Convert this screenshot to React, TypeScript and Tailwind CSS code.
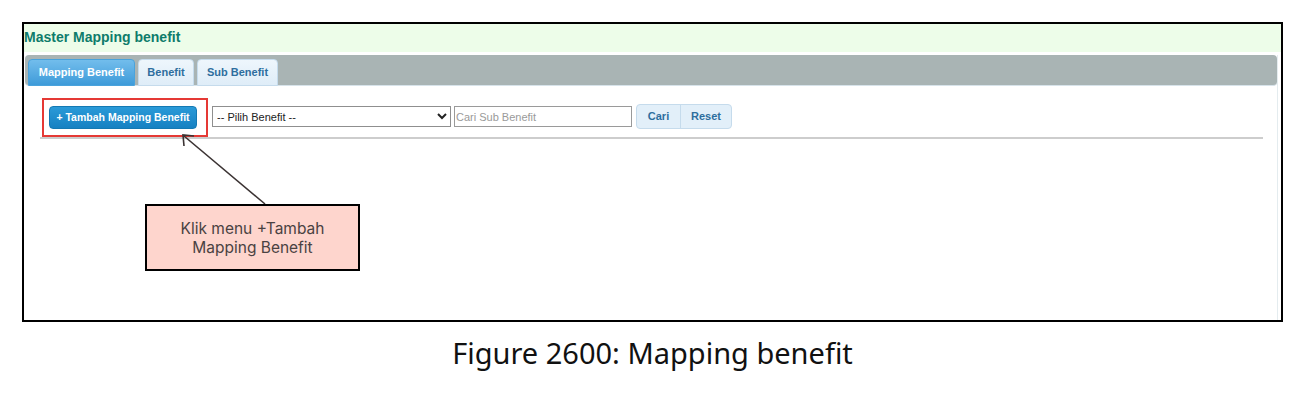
import React from 'react';

// ── Tabs on the grey tab bar ────────────────────────────────────────────────
const tabs = [
  { label: 'Mapping Benefit', active: true, w: 'w-[107px]' },
  { label: 'Benefit', active: false, w: 'w-[56px]' },
  { label: 'Sub Benefit', active: false, w: 'w-[81px]' },
];

const TabBar: React.FC = () => (
  <div className="ml-[1px] mt-[3px] h-[31px] w-[1252px] rounded-[4px] border-b border-[#d7e3ea] bg-[#a9b4b4] pl-[3px] pt-[4px] flex gap-[3px]">
    {tabs.map((t) => (
      <div
        key={t.label}
        className={
          t.active
            ? `${t.w} h-[27px] rounded-t-[4px] border border-[#4aa3dc] bg-gradient-to-b from-[#72bdec] to-[#3d9bd9] text-white flex items-center justify-center text-[11px] font-bold`
            : `${t.w} h-[27px] rounded-t-[4px] border border-[#c5dbec] bg-gradient-to-b from-[#eef6fc] to-[#dfedf8] text-[#2e6e9e] flex items-center justify-center text-[11px] font-bold`
        }
      >
        {t.label}
      </div>
    ))}
  </div>
);

// ── Toolbar with the annotated add button ───────────────────────────────────
const Toolbar: React.FC = () => (
  <div className="mt-[18px] pl-[25px] flex items-center h-[25px]">
    <span className="relative">
      <button className="h-[23px] w-[148px] rounded-[4px] border border-[#1479b3] bg-gradient-to-b from-[#2a9ad8] to-[#1681c2] text-white text-[10.5px] font-bold">
        + Tambah Mapping Benefit
      </button>
      <span className="absolute -left-[7px] -top-[6px] w-[166px] h-[39px] border-2 border-[#e53935]" />
    </span>
    <select className="ml-[15px] h-[21px] w-[239px] border border-[#8f8f8f] bg-white text-[11px] text-[#222]">
      <option>-- Pilih Benefit --</option>
    </select>
    <input
      className="ml-[3px] h-[21px] w-[178px] border border-[#9a9a9a] bg-white px-[1px] text-[11px] outline-none placeholder:text-[#9a9a9a]"
      placeholder="Cari Sub Benefit"
    />
    <div className="ml-[4px] flex h-[25px] rounded-[4px] border border-[#c5dbec] bg-[#e2eff9] text-[11px] font-bold text-[#2e6e9e]">
      <span className="w-[44px] flex items-center justify-center border-r border-[#c5dbec]">Cari</span>
      <span className="w-[50px] flex items-center justify-center">Reset</span>
    </div>
  </div>
);

export default function App() {
  return (
    <div className="w-[1305px] h-[393px] bg-white pl-[22px] pt-[22px] font-['Liberation_Sans',Arial,sans-serif]">
      <div className="relative w-[1261px] h-[300px] border-2 border-black bg-white overflow-hidden">
        {/* Header */}
        <div className="h-[28px] bg-[#edfde9] flex items-center pb-[2px]">
          <span className="text-[14px] font-bold text-[#0e7c6b]">Master Mapping benefit</span>
        </div>

        <div className="border-r border-[#e4ecef] mr-[3px] h-[268px]">
          <TabBar />
          <Toolbar />
          <div className="mt-[8px] ml-[16px] w-[1223px] h-[2px] bg-[#cdcdcd]" />
        </div>

        {/* Annotation arrow */}
        <svg className="absolute left-0 top-0 pointer-events-none" width="1257" height="296">
          <line x1="241" y1="180" x2="160" y2="112" stroke="#3b3333" strokeWidth="1.6" />
          <polyline points="160,122 159,111 170,112" fill="none" stroke="#3b3333" strokeWidth="1.6" />
        </svg>

        {/* Annotation callout */}
        <div className="absolute left-[121px] top-[180px] w-[215px] h-[67px] border-2 border-black bg-[#fed5cd] flex items-center justify-center text-center font-['Inter',sans-serif] text-[15.5px] leading-[19px] text-[#4a4242]">
          <span>
            Klik menu +Tambah
            <br />
            Mapping Benefit
          </span>
        </div>
      </div>

      <div className="w-[1261px] mt-[13px] text-center font-['Noto_Sans',sans-serif] text-[29px] leading-[36px] text-[#111]">
        Figure 2600: Mapping benefit
      </div>
    </div>
  );
}
